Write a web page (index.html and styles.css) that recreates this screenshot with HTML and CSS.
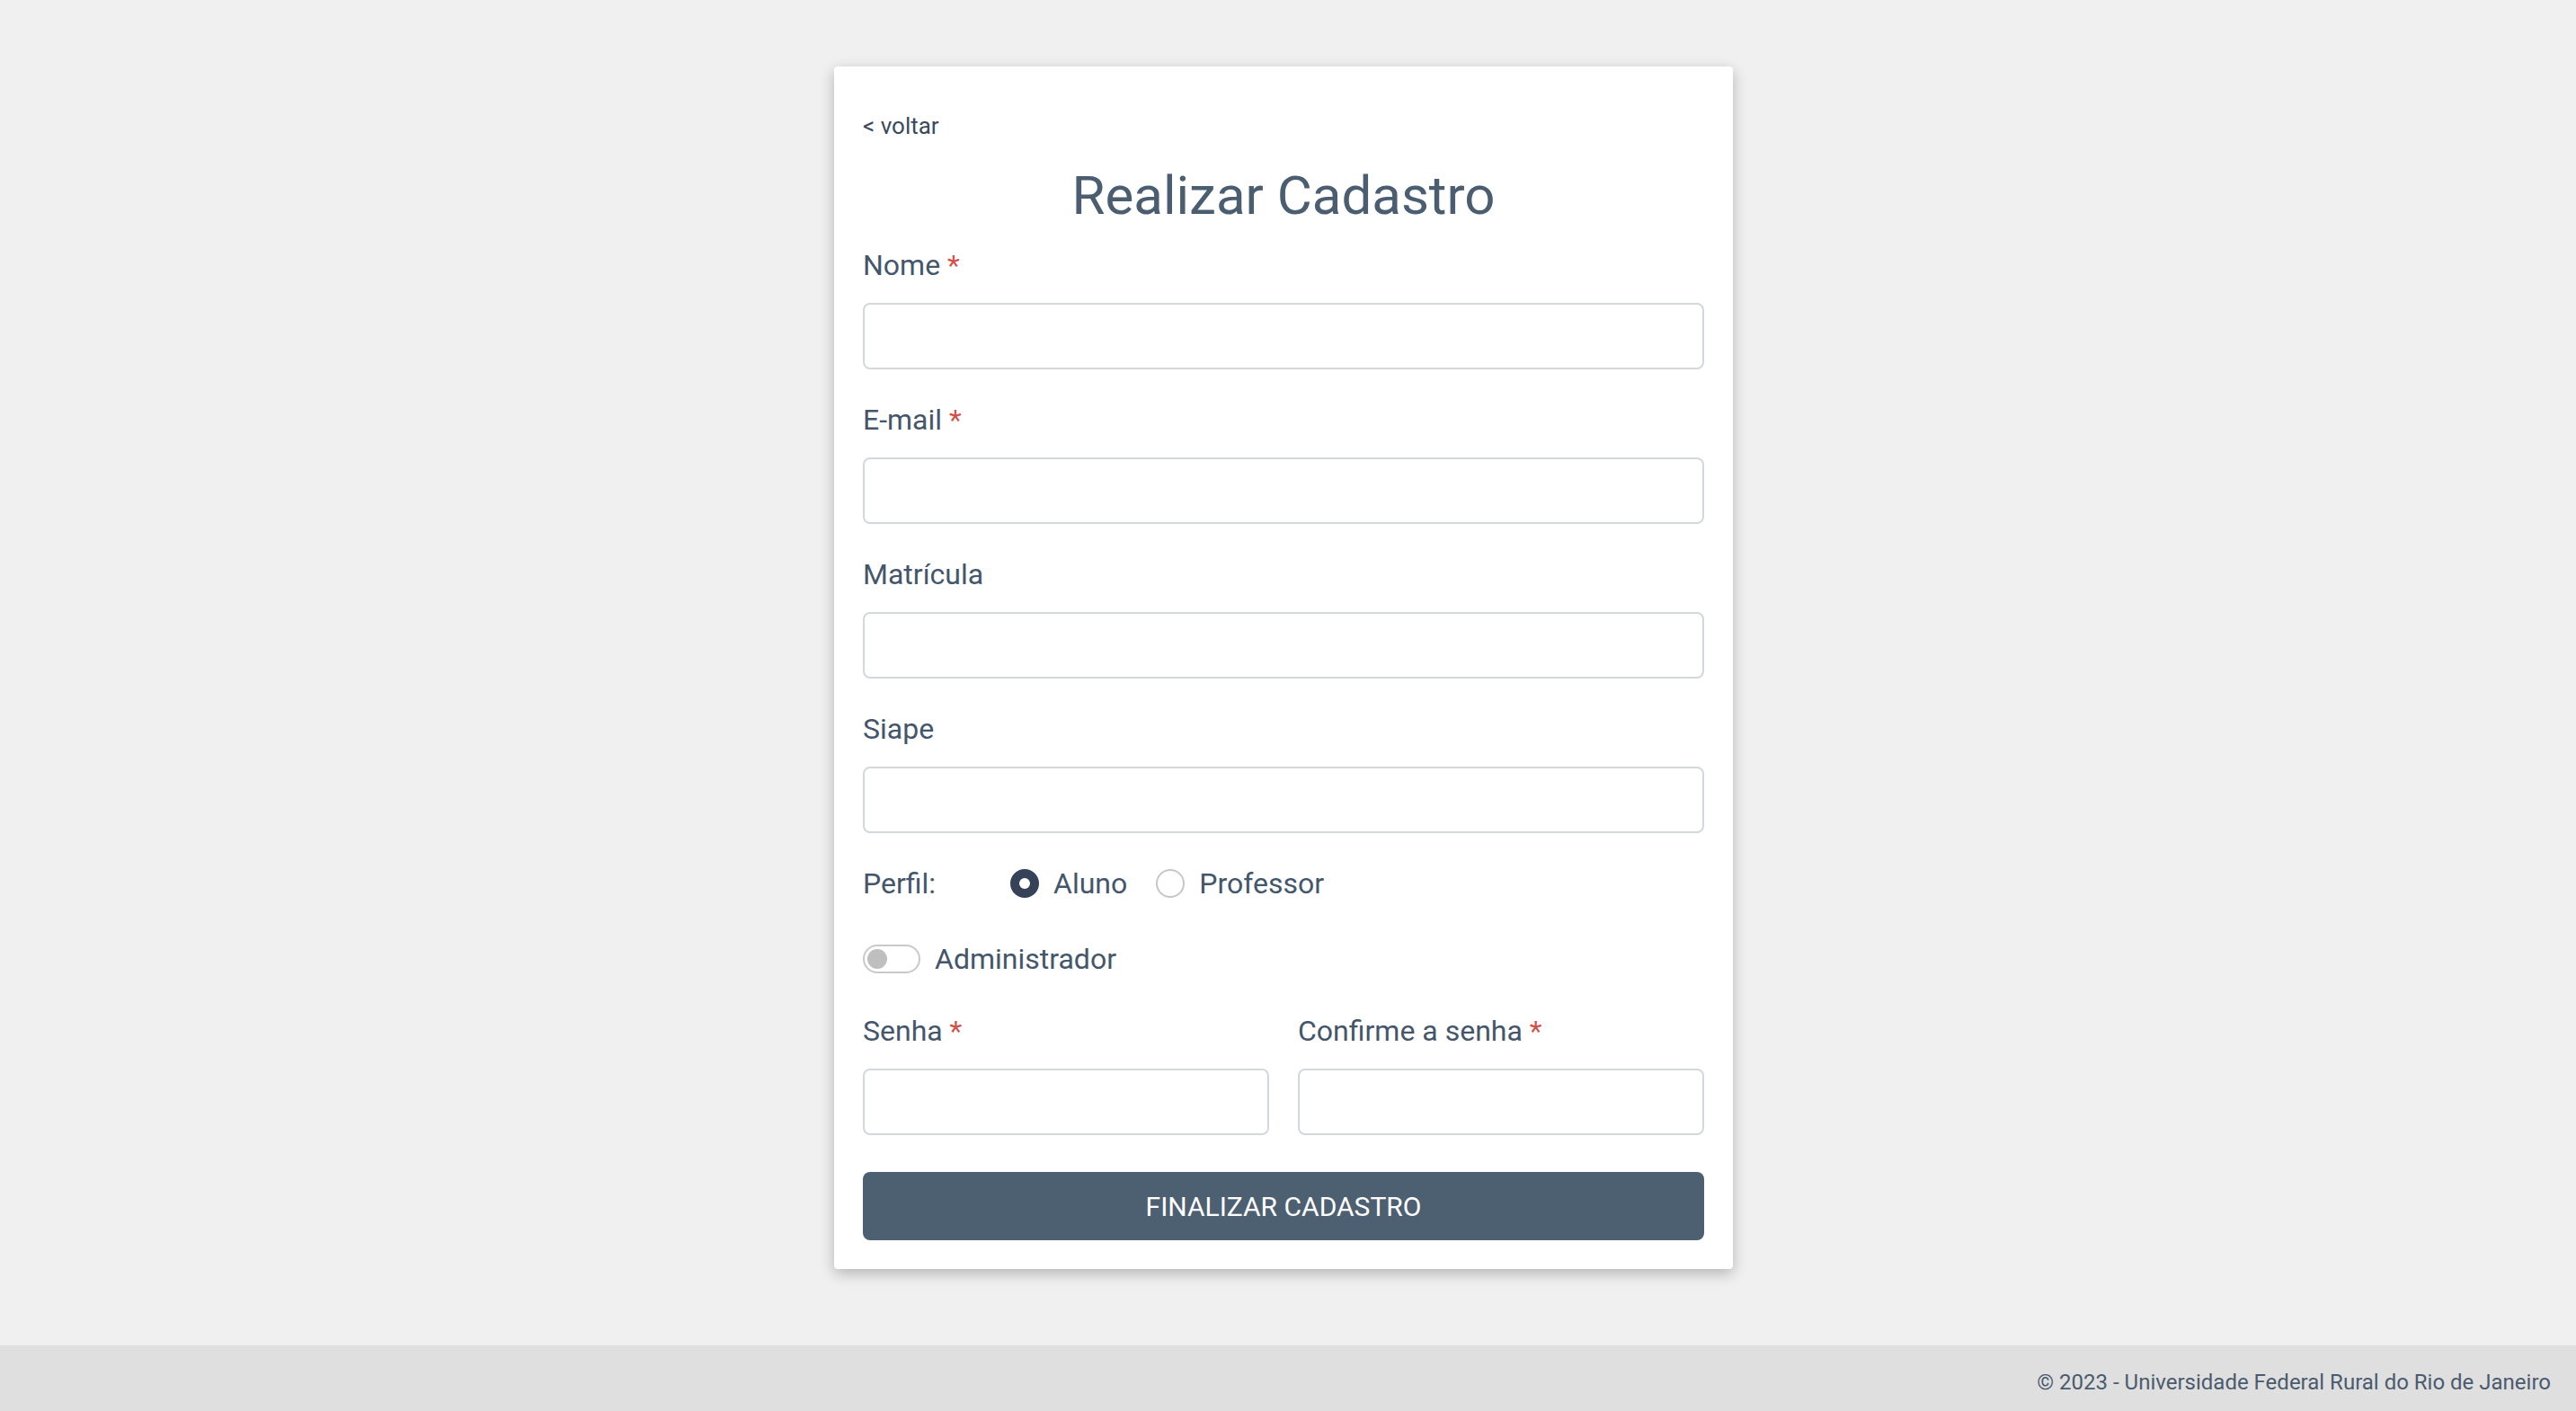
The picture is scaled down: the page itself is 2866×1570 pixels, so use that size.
FILE: index.html
```html
<!DOCTYPE html>
<html lang="pt-BR">
<head>
<meta charset="utf-8">
<title>Realizar Cadastro</title>
<link rel="stylesheet" href="styles.css">
</head>
<body>
<main class="page">
  <section class="card">
    <a class="back" href="#">&lt; voltar</a>
    <h1 class="title">Realizar Cadastro</h1>
    <div class="field">
      <label class="label">Nome <span class="req">*</span></label>
      <input class="input" type="text">
    </div>
    <div class="field">
      <label class="label">E-mail <span class="req">*</span></label>
      <input class="input" type="email">
    </div>
    <div class="field">
      <label class="label">Matrícula</label>
      <input class="input" type="text">
    </div>
    <div class="field">
      <label class="label">Siape</label>
      <input class="input" type="text">
    </div>
    <div class="row perfil">
      <span class="perfil-label">Perfil:</span>
      <label class="radio-opt"><span class="radio checked"></span><span>Aluno</span></label>
      <label class="radio-opt"><span class="radio"></span><span>Professor</span></label>
    </div>
    <div class="row admin">
      <span class="switch"><span class="knob"></span></span>
      <span>Administrador</span>
    </div>
    <div class="pair">
      <div class="field">
        <label class="label">Senha <span class="req">*</span></label>
        <input class="input" type="password">
      </div>
      <div class="field">
        <label class="label">Confirme a senha <span class="req">*</span></label>
        <input class="input" type="password">
      </div>
    </div>
    <button class="submit" type="button">FINALIZAR CADASTRO</button>
  </section>
</main>
<footer class="footer">© 2023 - Universidade Federal Rural do Rio de Janeiro</footer>
</body>
</html>
```

FILE: styles.css
```css
* { box-sizing: border-box; }
html, body { height: 100%; }
body {
  margin: 0;
  background: #f0f0f0;
  font-family: Roboto, "Liberation Sans", Arial, sans-serif;
  color: #44566b;
  display: flex;
  flex-direction: column;
  min-height: 1570px;
}
.page {
  flex: 1;
  padding-top: 74px;
  padding-right: 10px;
}
.card {
  width: 1000px;
  margin: 0 auto;
  background: #fff;
  border-radius: 4px;
  box-shadow: 0 5px 16px rgba(0, 0, 0, 0.25);
  padding: 50px 32px 32px;
  display: flex;
  flex-direction: column;
}
.back {
  font-size: 26px;
  line-height: 32px;
  color: #3b4a5c;
  text-decoration: none;
  align-self: flex-start;
}
.title {
  margin: 26px 0 17px;
  font-size: 60px;
  line-height: 72px;
  font-weight: 400;
  text-align: center;
  color: #4a5d71;
}
.field {
  display: flex;
  flex-direction: column;
  margin-bottom: 32px;
}
.label {
  font-size: 32px;
  line-height: 48px;
  margin-bottom: 18px;
  color: #44566b;
}
.req { color: #d2514b; }
.input {
  height: 74px;
  border: 2px solid #d3d8de;
  border-radius: 8px;
  background: #fff;
  width: 100%;
  font: inherit;
  outline: none;
}
.row {
  display: flex;
  align-items: center;
  height: 48px;
  font-size: 32px;
  line-height: 48px;
}
.perfil { margin-bottom: 36px; }
.perfil-label { width: 164px; }
.radio-opt {
  display: flex;
  align-items: center;
  gap: 16px;
  margin-right: 32px;
}
.radio {
  width: 32px;
  height: 32px;
  border-radius: 50%;
  border: 2px solid #c6c6c6;
  background: #fff;
}
.radio.checked { border: 10px solid #354258; }
.admin { gap: 16px; margin-bottom: 32px; }
.switch {
  width: 64px;
  height: 32px;
  border: 2px solid #c9c9c9;
  border-radius: 16px;
  display: flex;
  align-items: center;
  padding-left: 3px;
}
.knob {
  width: 22px;
  height: 22px;
  border-radius: 50%;
  background: #bfbfbf;
}
.pair {
  display: grid;
  grid-template-columns: 1fr 1fr;
  gap: 32px;
}
.pair .field { margin-bottom: 41px; }
.submit {
  height: 76px;
  border: none;
  border-radius: 8px;
  background: #4d6072;
  color: #fff;
  font-family: Roboto, "Liberation Sans", Arial, sans-serif;
  font-size: 30px;
  width: 100%;
}
.footer {
  height: 73px;
  background: #dfdfdf;
  display: flex;
  align-items: center;
  justify-content: flex-end;
  padding-right: 28px;
  padding-top: 8px;
  font-size: 24px;
  color: #4a5b6e;
}
```
